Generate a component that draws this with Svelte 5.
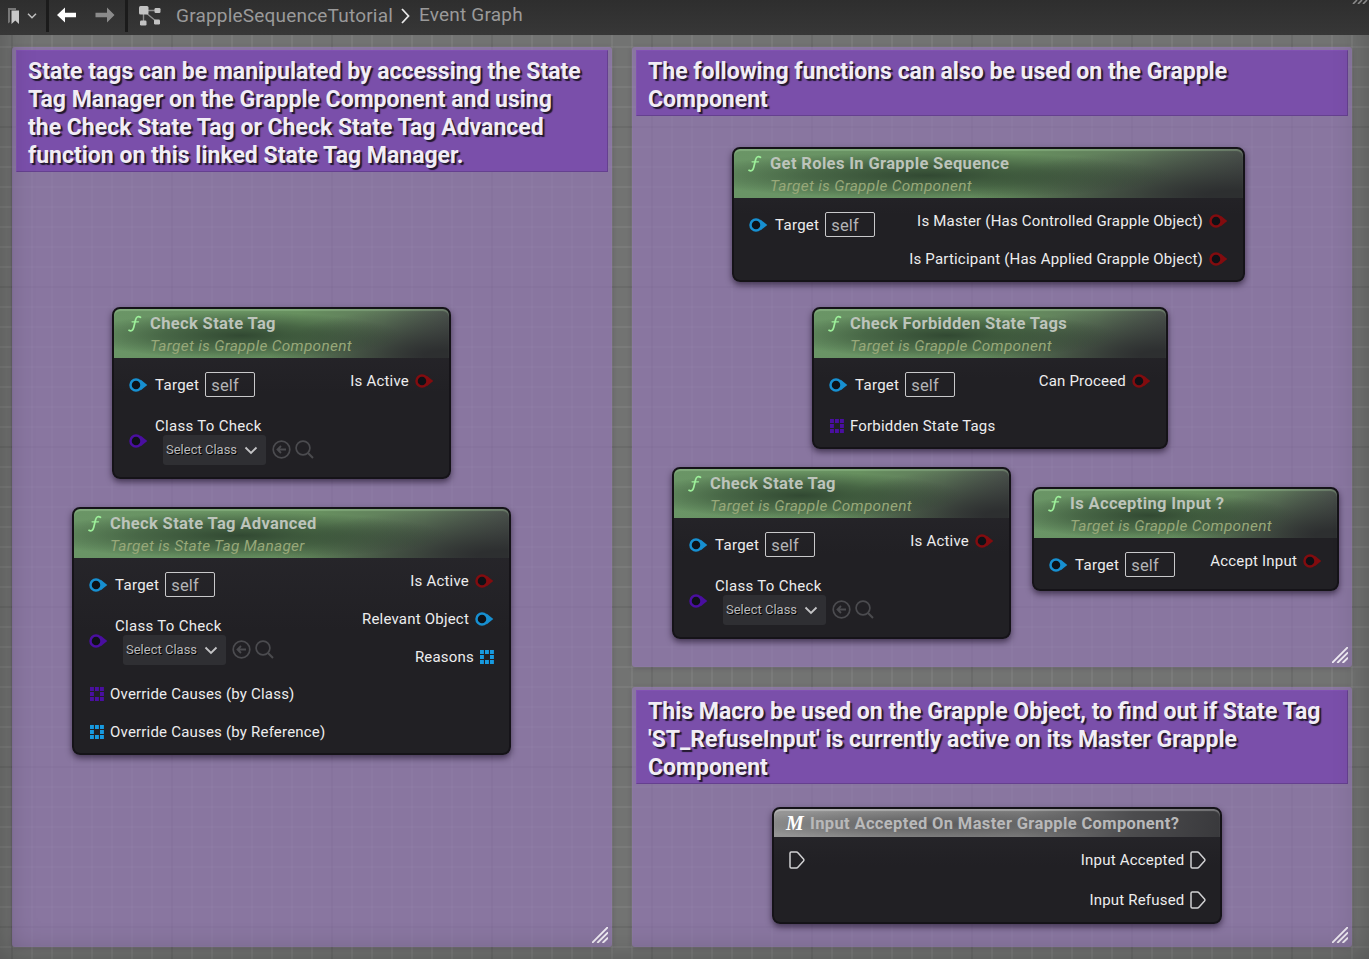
<script>
  const fn = (x, y, w, h, title, sub, inputs, outputs) => ({ x, y, w, h, title, sub, inputs, outputs });
  const nodes = [
    fn(112, 307, 339, 172, 'Check State Tag', 'Target is Grapple Component', [{ k: 'target' }, { k: 'class' }], [{ t: 'Is Active', p: 'bool' }]),
    fn(72, 507, 439, 248, 'Check State Tag Advanced', 'Target is State Tag Manager',
      [{ k: 'target' }, { k: 'class' }, { k: 'array', c: '#4a0fa0', t: 'Override Causes (by Class)' }, { k: 'array', c: '#179ae0', t: 'Override Causes (by Reference)' }],
      [{ t: 'Is Active', p: 'bool' }, { t: 'Relevant Object', p: 'object' }, { t: 'Reasons', p: 'array' }]),
    fn(732, 147, 513, 135, 'Get Roles In Grapple Sequence', 'Target is Grapple Component', [{ k: 'target' }],
      [{ t: 'Is Master (Has Controlled Grapple Object)', p: 'bool' }, { t: 'Is Participant (Has Applied Grapple Object)', p: 'bool' }]),
    fn(812, 307, 356, 142, 'Check Forbidden State Tags', 'Target is Grapple Component',
      [{ k: 'target' }, { k: 'array', c: '#4a0fa0', t: 'Forbidden State Tags' }], [{ t: 'Can Proceed', p: 'bool' }]),
    fn(672, 467, 339, 172, 'Check State Tag', 'Target is Grapple Component', [{ k: 'target' }, { k: 'class' }], [{ t: 'Is Active', p: 'bool' }]),
    fn(1032, 487, 307, 104, 'Is Accepting Input ?', 'Target is Grapple Component', [{ k: 'target' }], [{ t: 'Accept Input', p: 'bool' }]),
    { ...fn(772, 807, 450, 117, 'Input Accepted On Master Grapple Component?', '', [{ k: 'exec' }],
      [{ t: 'Input Accepted', p: 'exec' }, { t: 'Input Refused', p: 'exec' }]), macro: true }
  ];
  const comments = [
    { x: 12, y: 47, w: 600, h: 900, lines: ['State tags can be manipulated by accessing the State', 'Tag Manager on the Grapple Component and using', 'the Check State Tag or Check State Tag Advanced', 'function on this linked State Tag Manager.'] },
    { x: 632, y: 47, w: 720, h: 620, lines: ['The following functions can also be used on the Grapple', 'Component'] },
    { x: 632, y: 687, w: 720, h: 260, lines: ['This Macro be used on the Grapple Object, to find out if State Tag', "'ST_RefuseInput' is currently active on its Master Grapple", 'Component'] }
  ];
  const colors = { bool: '#820c0f', object: '#178fd0', cls: '#4a0fa0' };
  const cells = [[0, 0], [5, 0], [10, 0], [0, 5], [10, 5], [0, 10], [5, 10], [10, 10]];
</script>

{#snippet pin(c)}
  <svg class="pin" width="19" height="14" viewBox="0 0 19 14">
    <path d="M11.500 1.600 18.300 7l-6.800 5.400z" fill={c} />
    <circle cx="7" cy="7" r="5.500" fill="#0e1116" stroke={c} stroke-width="2.500" />
  </svg>
{/snippet}
{#snippet arrayPin(c)}
  <svg class="arr" width="14" height="14" viewBox="0 0 14 14" fill={c}>
    {#each cells as [x, y]}<rect {x} {y} width="3.900" height="4" />{/each}
  </svg>
{/snippet}
{#snippet execPin()}
  <svg class="execpin" width="16" height="18" viewBox="0 0 16 18"><path d="M2.200 1h5.200q.9 0 1.500.7l5.600 6.300q.8 1 0 2l-5.600 6.300q-.6.7-1.500.7H2.200Q1 17 1 15.800V2.200Q1 1 2.200 1z" fill="none" stroke="#d0d0d2" stroke-width="1.500" /></svg>
{/snippet}

<main>
  <div class="canvas">
    {#each comments as c}
      <section class="comment" style="left:{c.x}px;top:{c.y}px;width:{c.w}px;height:{c.h}px">
        <h2>{#each c.lines as l}<span>{l}</span>{/each}</h2>
        <svg class="grip" width="16" height="16" viewBox="0 0 16 16" stroke="#f0ecf4" stroke-width="1.900"><path d="M0 16 16 0M5.300 16 16 5.300M10.600 16 16 10.600" /></svg>
      </section>
    {/each}
    {#each nodes as n}
      <article class="node" class:macro={n.macro} style="left:{n.x}px;top:{n.y}px;width:{n.w}px;height:{n.h}px">
        <header>
          {#if n.macro}
            <span class="m">M</span>
          {:else}
            <svg class="glyph" width="18" height="18" viewBox="0 0 18 18" fill="none" stroke="#9df09a" stroke-linecap="round"><path d="M14.500 2.300C12 .600 10.200 2 9.500 5L7.700 12.500C7 15.500 5 16.800 3 15.300" stroke-width="1.700" /><path d="M6 6.800h6.500" stroke-width="1.200" /></svg>
          {/if}
          <div class="names"><b>{n.title}</b>{#if n.sub}<i>{n.sub}</i>{/if}</div>
        </header>
        <div class="body">
          <div class="ins">
            {#each n.inputs as p}
              {#if p.k === 'target'}
                <div class="row target">{@render pin(colors.object)}<span>Target</span><span class="self">self</span></div>
              {:else if p.k === 'class'}
                <div class="row cls">
                  {@render pin(colors.cls)}
                  <div class="clsbox">
                    <span>Class To Check</span>
                    <div class="picker">
                      <div class="select">Select Class<svg width="14" height="9" viewBox="0 0 14 9" fill="none" stroke="#c4c4c6" stroke-width="1.800"><path d="M1.500 1.500 7 7l5.500-5.500" /></svg></div>
                      <svg class="use" width="19" height="19" viewBox="0 0 19 19" fill="none" stroke="#4b4b4f" stroke-width="1.700"><circle cx="9.500" cy="9.500" r="8.300" /><path d="M14 9.500H5.500M9 6 5.500 9.500 9 13" stroke-width="1.800" /></svg>
                      <svg class="find" width="19" height="19" viewBox="0 0 19 19" fill="none" stroke="#4b4b4f" stroke-width="1.700"><circle cx="8" cy="8" r="6.900" /><path d="m13 13 5 5" stroke-width="2" /></svg>
                    </div>
                  </div>
                </div>
              {:else if p.k === 'array'}
                <div class="row arrow">{@render arrayPin(p.c)}<span>{p.t}</span></div>
              {:else}
                <div class="row ex">{@render execPin()}</div>
              {/if}
            {/each}
          </div>
          <div class="outs">
            {#each n.outputs as o}
              <div class="row out" class:ex={o.p === 'exec'}>
                <span>{o.t}</span>
                {#if o.p === 'array'}{@render arrayPin('#179ae0')}{:else if o.p === 'exec'}{@render execPin()}{:else}{@render pin(colors[o.p])}{/if}
              </div>
            {/each}
          </div>
        </div>
      </article>
    {/each}
  </div>
  <nav>
    <div class="group marks">
      <svg width="12" height="17" viewBox="0 0 12 17"><path d="M0 0h8v2H2v12L0 15.500z" fill="#777" /><path d="M3.500 2.500H11V16L7.300 12.500 3.500 16z" fill="#c8c8c8" /></svg>
      <svg width="10" height="6" viewBox="0 0 10 6" fill="none" stroke="#c0c0c0" stroke-width="1.500"><path d="m1 .8 4 4 4-4" /></svg>
    </div>
    <div class="group arrows">
      <svg width="20" height="16" viewBox="0 0 20 16"><path d="M0 8 8 .5V5.800H19V10.200H8V15.500z" fill="#fff" /></svg>
      <svg width="20" height="16" viewBox="0 0 20 16"><path d="M19.500 8 12 .5V5.800H.5V10.200H12V15.500z" fill="#8b8b8b" /></svg>
    </div>
    <div class="crumbs">
      <svg width="24" height="22" viewBox="0 0 24 22" fill="#c2c2c2"><path d="M5.500 5v12M5 5.500h14M7 7l12 10" stroke="#8c8c8c" stroke-width="1.400" /><rect x="1" y="1" width="9.500" height="8.500" rx="1.500" /><rect x="16.500" y="3" width="6" height="5" rx="1.200" /><rect x="2" y="15.500" width="6.500" height="5" rx="1.200" /><rect x="16" y="14.500" width="6" height="5" rx="1.200" /></svg>
      <span class="c1">GrappleSequenceTutorial</span>
      <svg class="sep" width="9" height="16" viewBox="0 0 9 16" fill="none" stroke="#e8e8e8" stroke-width="1.800"><path d="m1 1 6.500 7L1 15" /></svg>
      <span class="c2">Event Graph</span>
    </div>
    <svg class="corner" width="17" height="4" viewBox="0 0 17 4" stroke="#8a8a8a" stroke-width="1.600"><path d="m1 4 4-4M6 4l4-4M11 4l4-4" /></svg>
  </nav>
</main>

<style>
  :global(body) { margin: 0; overflow: hidden; }
  main { position: relative; width: 1369px; height: 959px; overflow: hidden; font-family: Roboto, sans-serif; background: #6d6d6d; }
  .canvas {
    position: absolute; inset: 0;
    background:
      linear-gradient(90deg, rgba(0,0,0,.13) 2px, transparent 2px) 11px 0 / 160px 160px,
      linear-gradient(rgba(0,0,0,.13) 2px, transparent 2px) 0 126px / 160px 160px,
      linear-gradient(90deg, rgba(255,255,255,.055) 2px, transparent 2px) 11px 0 / 20px 20px,
      linear-gradient(rgba(255,255,255,.055) 2px, transparent 2px) 0 6px / 20px 20px,
      #727372;
  }
  .canvas::after { content: ''; position: absolute; inset: 0; pointer-events: none; box-shadow: inset 0 0 34px rgba(0,0,0,.28); }
  .comment { position: absolute; box-sizing: border-box; padding: 3px 4px; background: rgba(148,120,183,.66); border-radius: 3px; box-shadow: 0 1px 5px rgba(50,30,60,.25); }
  h2 { margin: 0; padding: 7px 11px 1px; background: #7a4faa; border: 1px solid #8152b2; border-bottom-color: #65408f; border-right-color: #65408f; box-sizing: border-box; font: 700 23px/28px Roboto, sans-serif; color: #f1edf5; text-shadow: 2px 2px 1px #21182d; }
  h2 span { display: block; white-space: nowrap; }
  .grip { position: absolute; right: 4px; bottom: 4px; }
  .node { position: absolute; box-sizing: border-box; border: 2px solid #151318; border-radius: 8px; background: linear-gradient(#29282d, #212024 50%, #212024); box-shadow: 0 3px 6px rgba(20,10,30,.6); color: #ededee; font-size: 15px; letter-spacing: .2px; }
  header { box-sizing: border-box; height: 49px; border-radius: 6px 6px 0 0; display: flex; padding: 4px 0 0 12px; box-shadow: inset 0 2px 1px rgba(190,235,180,.28);
    background: radial-gradient(ellipse 48% 48% at 38% 54%, rgba(40,60,42,.85), rgba(40,60,42,.5) 50%, transparent), radial-gradient(ellipse 52% 100% at 98% 95%, #2d2f30 10%, rgba(45,47,48,0)), linear-gradient(95deg, #6a9566 0, #67905f 55%, #5f795b 80%, #4c524e 100%); }
  .macro header { height: 28px; box-shadow: inset 0 2px 1px rgba(255,255,255,.3); background: radial-gradient(ellipse 45% 55% at 35% 55%, rgba(60,60,62,.6), transparent), linear-gradient(100deg, #969696, #7c7c7c 55%, #4c4c4e 80%, #39393c); }
  .glyph { margin: 2px 6px 0 0; flex: none; }
  .m { width: 24px; flex: none; font: italic 700 21px/21px "Liberation Serif", serif; letter-spacing: 0; color: #fff; transform: scaleX(.95); transform-origin: 0 0; }
  .names { display: flex; flex-direction: column; white-space: nowrap; }
  b { font-size: 16.500px; line-height: 21px; letter-spacing: .36px; color: #bdc4bb; }
  .macro b { color: #b9b9ba; }
  i { font-size: 15.400px; line-height: 25px; letter-spacing: .3px; color: #98a879; }
  .body { display: flex; justify-content: space-between; padding: 3px 15px 0 15px; white-space: nowrap; }
  .row { display: flex; align-items: center; }
  .pin, .arr, .execpin { flex: none; display: block; }
  .target { box-sizing: border-box; height: 46px; gap: 7px; }
  .target .pin { margin-top: 1px; }
  .target span { position: relative; top: .5px; }
  .target span:first-of-type { letter-spacing: .3px; }
  .self { box-sizing: border-box; width: 50px; height: 25px; border: 1.500px solid #c9c9cb; border-radius: 2px; padding-left: 5px; font-size: 16.500px; line-height: 25px; letter-spacing: .1px; color: #b5b5b7; margin-left: -1px; }
  .cls { height: 68px; gap: 7px; align-items: flex-start; }
  .cls > .pin { margin-top: 27px; }
  .clsbox { padding-top: 10px; line-height: 18px; letter-spacing: .3px; }
  .picker { display: flex; align-items: center; margin: 0 0 0 8px; }
  .select { box-sizing: border-box; width: 103px; height: 30px; border-radius: 3px; background: #2f2f33; padding: 0 8px 0 3px; display: flex; align-items: center; justify-content: space-between; font-size: 13px; letter-spacing: 0; color: #b9b9bb; text-shadow: 1px 1px 0 #000; }
  .use { margin-left: 5.500px; margin-bottom: 1px; }
  .find { margin-left: 4px; margin-bottom: 1px; }
  .arrow { height: 38px; gap: 6px; padding-left: 1px; }
  .out { height: 38px; justify-content: flex-end; gap: 6px; position: relative; top: 1px; }
  .ex { height: 40px; }
  .out.ex { top: 0; right: -1px; }
  .out.ex .execpin { margin-left: -.5px; }
  nav { position: absolute; inset: 0 0 auto; height: 35px; background: linear-gradient(#2e2e2e, #373737); display: flex; color: #9a9a9a; }
  .group { box-sizing: border-box; height: 32px; border-right: 3px solid #1b1b1b; display: flex; align-items: center; }
  .marks { width: 49px; padding-left: 8px; gap: 7px; }
  .arrows { width: 79px; padding-left: 8px; gap: 18px; padding-bottom: 2px; }
  .crumbs { display: flex; align-items: center; height: 31px; padding-left: 10px; font-size: 19px; letter-spacing: .2px; white-space: nowrap; }
  .c1 { margin-left: 14px; }
  .sep { margin: 0 9px 0 8px; }
  .c2 { padding-bottom: 2px; }
  .corner { margin-left: auto; }
</style>
